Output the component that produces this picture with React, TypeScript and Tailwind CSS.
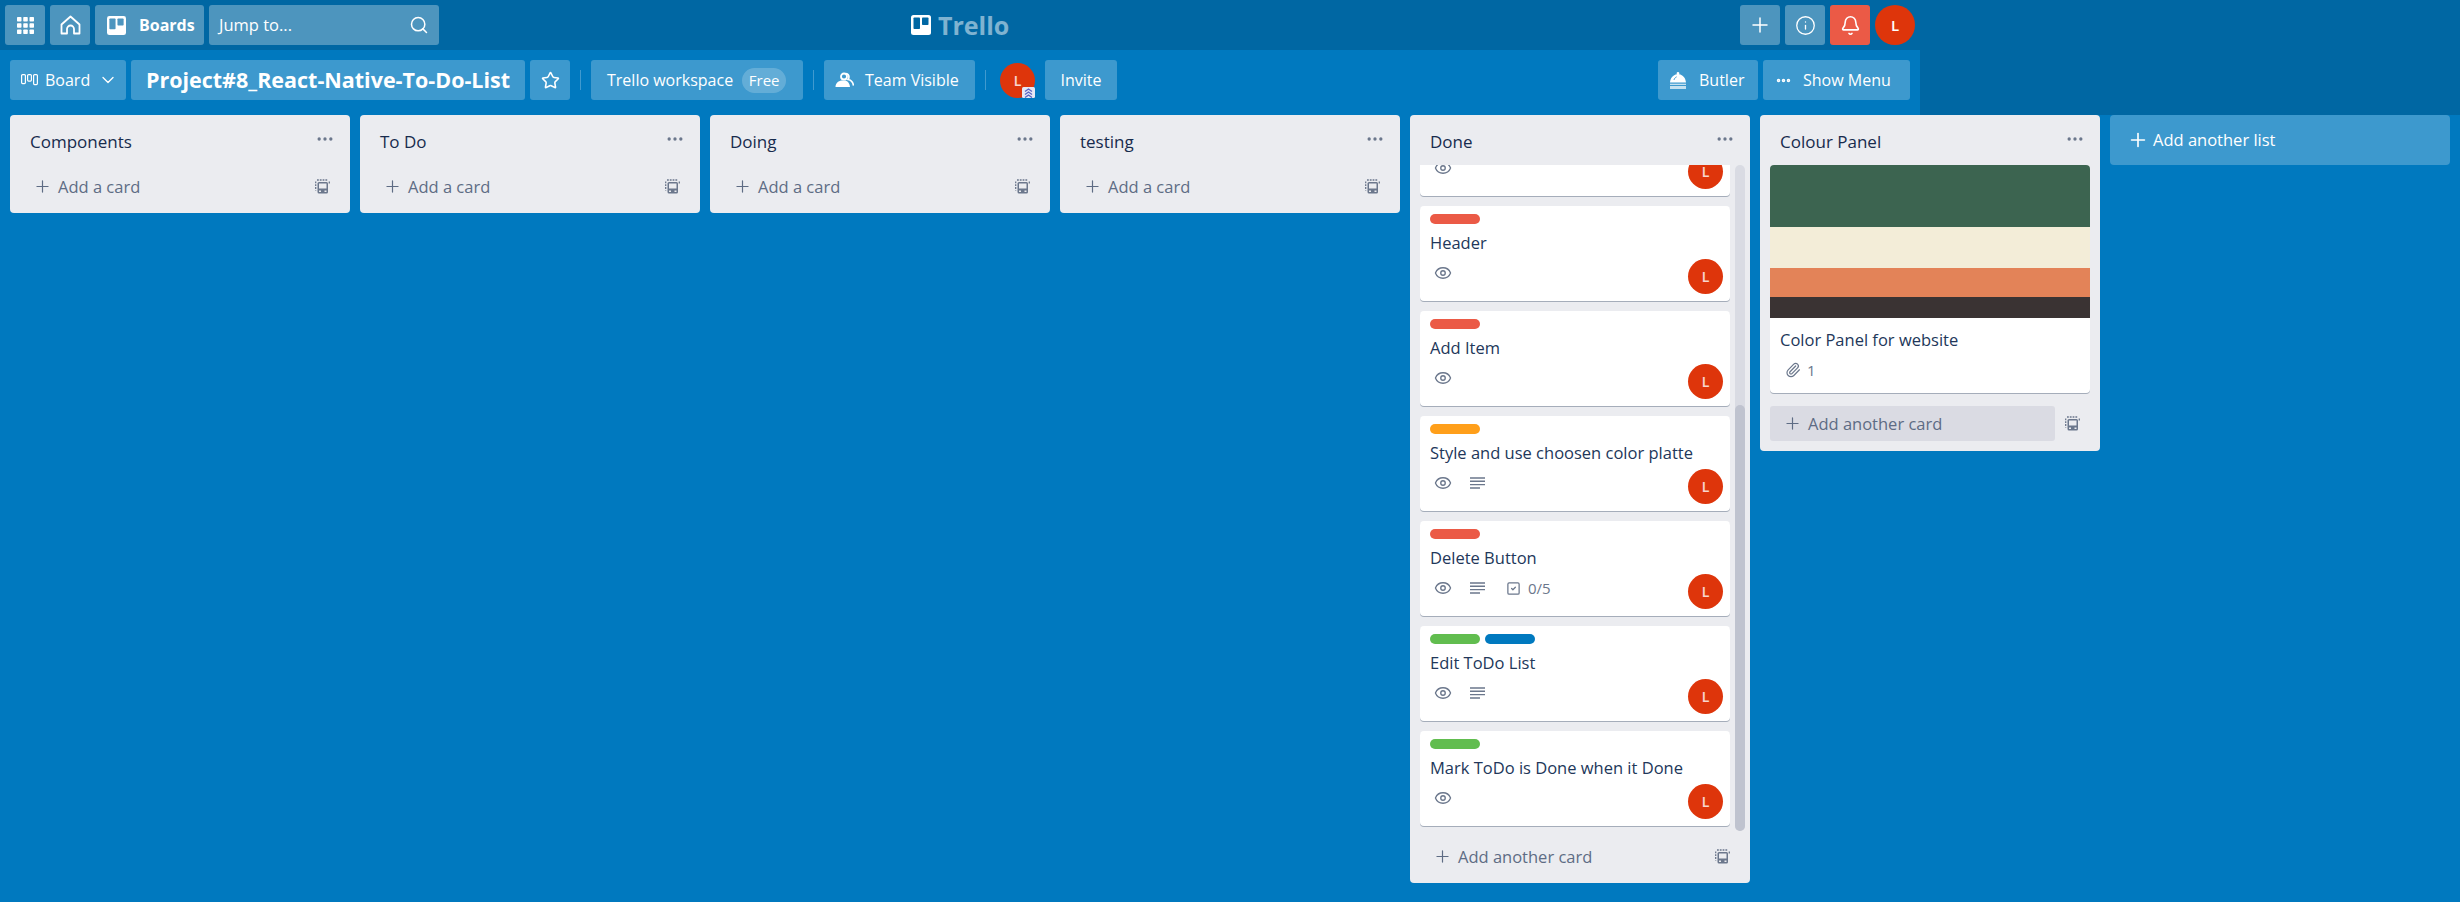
import React from "react";
import { Plus, Info, Bell, Search, Star, ChevronDown, Eye, SquareCheck, Paperclip, Ellipsis } from "lucide-react";

const font = "font-['Open_Sans','Noto_Sans',sans-serif]";
const btn = "flex items-center rounded-[3px] bg-white/30 h-10 text-white";
const boardBtn = "flex items-center rounded-[3px] bg-white/24 h-10 text-white";

function TemplateIcon({ className = "" }: { className?: string }) {
  return (
    <svg width="15" height="15" viewBox="0 0 15 15" className={className} fill="none">
      <path d="M2 1h11" stroke="#6b778c" strokeWidth="1.300" strokeDasharray="1.800 1" />
      <path d="M.7 2.500v9" stroke="#6b778c" strokeWidth="1.300" strokeDasharray="1.800 1" />
      <path d="M14.300 2.500v2" stroke="#6b778c" strokeWidth="1.300" />
      <rect x="2.500" y="3" width="10.500" height="11.500" rx="1.500" fill="#6b778c" />
      <rect x="4" y="4.500" width="7.500" height="5" fill="#ebecf0" />
      <rect x="4" y="11.500" width="2" height="1.500" fill="#ebecf0" />
      <rect x="9.500" y="11.500" width="2" height="1.500" fill="#ebecf0" />
    </svg>
  );
}

function Avatar() {
  return (
    <div className="flex h-[35px] w-[35px] shrink-0 items-center justify-center rounded-full bg-[#de350b] text-[14px] font-semibold text-white/80">L</div>
  );
}

function DescIcon() {
  return (
    <svg width="16" height="12" viewBox="0 0 16 12" stroke="#6b778c" strokeWidth="1.400">
      <path d="M0 1h15M0 4.300h15M0 7.600h15M0 11h10" />
    </svg>
  );
}

type Label = "red" | "orange" | "green" | "blue";
const labelColors: Record<Label, string> = {
  red: "bg-[#eb5a46]",
  orange: "bg-[#ff9f1a]",
  green: "bg-[#61bd4f]",
  blue: "bg-[#0079bf]",
};

function Card({ labels, title, desc, check }: { labels: Label[]; title: string; desc?: boolean; check?: string }) {
  return (
    <div className="relative h-[95px] shrink-0 rounded-[4px] bg-white px-[10px] pt-2 shadow-[0_1px_0_#a5adba]">
      <div className="flex h-[10px] gap-[5px]">
        {labels.map((l, i) => (
          <span key={i} className={`h-[10px] w-[50px] rounded-[5px] ${labelColors[l]}`} />
        ))}
      </div>
      <div className="mt-[8px] h-[22px] text-[16.500px] leading-[22px] text-[#22375a]">{title}</div>
      <div className="mt-[9px] flex h-5 items-center pl-[4px] text-[#6b778c]">
        <Eye size={18} strokeWidth={1.800} />
        {desc && <span className="ml-[18px]"><DescIcon /></span>}
        {check && (
          <div className="ml-[20px] flex items-center gap-[7px] text-[15px]">
            <SquareCheck size={15} strokeWidth={2} />
            <span>{check}</span>
          </div>
        )}
      </div>
      <div className="absolute right-[7px] bottom-[7px]">
        <Avatar />
      </div>
    </div>
  );
}

function AddRow({ text }: { text: string }) {
  return (
    <div className="flex h-[35px] items-center pl-[15px] pr-[10px] text-[#5e6c84]">
      <Plus size={19} strokeWidth={1.500} className="-ml-[2px]" />
      <span className="ml-[6px] pt-px text-[16.500px]">{text}</span>
      <TemplateIcon className="ml-auto" />
    </div>
  );
}

function EmptyList({ title }: { title: string }) {
  return (
    <section className="w-[340px] shrink-0 self-start rounded-[4px] bg-[#ebecf0] pb-[9px]">
      <ListHeader title={title} />
      <div className="mt-[4px] px-[10px]">
        <AddRow text="Add a card" />
      </div>
    </section>
  );
}

function ListHeader({ title }: { title: string }) {
  return (
    <div className="flex h-[50px] items-center justify-between pl-[20px] pr-[15px] pt-[3px] text-[#172b4d]">
      <h2 className="text-[17px] font-medium">{title}</h2>
      <Ellipsis size={20} className="-mt-[5px] text-[#6b778c]" />
    </div>
  );
}

function Grid() {
  return (
    <svg width="17" height="17" viewBox="0 0 17 17" fill="#fff">
      {[0, 6.250, 12.500].map((y) =>
        [0, 6.250, 12.500].map((x) => <rect key={`${x}-${y}`} x={x} y={y} width="4.500" height="4.500" rx="0.700" />)
      )}
    </svg>
  );
}

function HomeIcon() {
  return (
    <svg width="21" height="20" viewBox="0 0 21 20" fill="none" stroke="#fff" strokeWidth="1.800" strokeLinejoin="round">
      <path d="M1.500 9.500 10.500 1.500l9 8V18.500H14V14a3.500 3.500 0 0 0-7 0v4.500H1.500z" />
    </svg>
  );
}

function BoardsIcon({ size = 19, hole = "#4d95bf" }: { size?: number; hole?: string }) {
  return (
    <svg width={size} height={size} viewBox="0 0 20 20">
      <rect width="20" height="20" rx="2.500" fill="#fff" />
      <rect x="2.500" y="2.500" width="6.500" height="11.500" rx="0.800" fill={hole} />
      <rect x="11" y="2.500" width="6.500" height="7.500" rx="0.800" fill={hole} />
    </svg>
  );
}

function TeamIcon() {
  return (
    <svg width="19" height="16" viewBox="0 0 19 16" fill="none">
      <circle cx="9" cy="4.500" r="3" stroke="#fff" strokeWidth="1.800" />
      <path d="M11 1.500c2 .5 3 2 3 3.500 0 1-.5 2-1 2.500 3 .5 5 3 5.500 6" stroke="#fff" strokeWidth="1.600" />
      <path d="M.500 15c0-4 3-6.500 7-6.500h2c3 0 5 2.500 5.500 6.500z" fill="#fff" />
    </svg>
  );
}

function ButlerIcon() {
  return (
    <svg width="18" height="17" viewBox="0 0 18 17" fill="#fff">
      <path d="M9 0a1.300 1.300 0 0 1 1 2.200C14 2.800 16.700 6 17 10.500H1C1.300 6 4 2.800 8 2.200A1.300 1.300 0 0 1 9 0z" />
      <path d="M5 8c.3-1.500 1.300-2.600 2.700-3.200" stroke="#4297cf" strokeWidth="0.900" fill="none" />
      <rect x="1" y="11.700" width="16" height="1.300" opacity="0.700" />
      <rect x="1" y="14" width="16" height="3" opacity="0.700" />
    </svg>
  );
}

function BoardIcon() {
  return (
    <svg width="17" height="12" viewBox="0 0 17 12" fill="none" stroke="#fff" strokeWidth="1.200">
      <rect x="0.600" y="0.600" width="3.800" height="9" rx="1" />
      <rect x="6.600" y="0.600" width="3.800" height="6.500" rx="1" />
      <rect x="12.600" y="0.600" width="3.800" height="10" rx="1" />
    </svg>
  );
}

function BadgeIcon() {
  return (
    <svg width="13" height="11" viewBox="0 0 13 11" fill="none" stroke="#5b66c4" strokeWidth="1.400">
      <rect width="13" height="11" fill="#e6e8f4" stroke="none" rx="1.500" />
      <path d="M3 4.500 6.500 2 10 4.500M3 7.500 6.500 5 10 7.500M3 10.500 6.500 8 10 10.500" />
    </svg>
  );
}

function Divider() {
  return <div className="mx-[10px] mt-[10px] h-5 w-px bg-white/25" />;
}

export default function App() {
  return (
    <div className={`${font} flex min-h-[902px] flex-col bg-[#0079bf]`}>
      <div className="bg-[#0067a3]">
        <div className="w-[1920px]">
          <header className="relative flex h-[50px] items-center gap-[5px] px-[5px]">
            <button className={`${btn} w-10 justify-center`}><Grid /></button>
            <button className={`${btn} w-10 justify-center`}><HomeIcon /></button>
            <button className={`${btn} w-[109px] pl-[12px] gap-[13px] text-[16px] font-bold`}>
              <BoardsIcon />
              Boards
            </button>
            <div className={`${btn} w-[230px] justify-between px-[10px] text-[16.500px]`}>
              <span>Jump to...</span>
              <Search size={20} strokeWidth={1.800} />
            </div>
            <div className="absolute left-[911px] top-[10px] flex items-center gap-[7px] text-white/50">
              <BoardsIcon size={20} hole="#0067a3" />
              <span className="text-[25px] font-bold leading-[30px]">Trello</span>
            </div>
            <div className="ml-auto flex items-center gap-[5px]">
              <button className={`${btn} w-10 justify-center`}><Plus size={24} strokeWidth={1.500} /></button>
              <button className={`${btn} w-10 justify-center`}><Info size={21} strokeWidth={1.500} /></button>
              <button className="flex h-10 w-10 items-center justify-center rounded-[3px] bg-[#eb5a46] text-white"><Bell size={21} strokeWidth={1.800} /></button>
              <div className="flex h-10 w-10 items-center justify-center rounded-full bg-[#de350b] text-[15px] font-semibold text-white">L</div>
            </div>
          </header>
          <nav className="flex h-[65px] items-start bg-[#0079bf] px-[10px] pt-[10px] text-[16px]">
            <button className={`${boardBtn} w-[116px] pl-[11px]`}>
              <BoardIcon />
              <span className="ml-[7px]">Board</span>
              <ChevronDown size={20} strokeWidth={1.600} className="ml-[8px]" />
            </button>
            <h1 className={`${boardBtn} ml-[5px] w-[394px] justify-center text-[21.500px] font-bold`}>Project#8_React-Native-To-Do-List</h1>
            <button className={`${boardBtn} ml-[5px] w-10 justify-center`}><Star size={19} strokeWidth={2} /></button>
            <Divider />
            <button className={`${boardBtn} w-[212px] pl-[16px]`}>
              Trello workspace
              <span className="ml-[9px] flex h-[25px] w-11 items-center justify-center rounded-full bg-white/20 text-[15px]">Free</span>
            </button>
            <Divider />
            <button className={`${boardBtn} w-[151px] pl-[11px] gap-[11px]`}>
              <TeamIcon />
              Team Visible
            </button>
            <Divider />
            <div className="relative mt-[3px] ml-[4px]">
              <Avatar />
              <span className="absolute right-0 bottom-0 flex"><BadgeIcon /></span>
            </div>
            <button className={`${boardBtn} ml-[10px] w-[72px] justify-center`}>Invite</button>
            <button className={`${boardBtn} ml-auto w-[100px] pl-[11px] gap-[12px]`}>
              <ButlerIcon />
              Butler
            </button>
            <button className={`${boardBtn} ml-[5px] w-[147px] pl-[12px] gap-[11px]`}>
              <Ellipsis size={17} strokeWidth={3} />
              Show Menu
            </button>
          </nav>
        </div>
      </div>
      <main className="flex items-start gap-[10px] px-[10px]">
        <EmptyList title="Components" />
        <EmptyList title="To Do" />
        <EmptyList title="Doing" />
        <EmptyList title="testing" />
        <section className="flex h-[768px] w-[340px] shrink-0 flex-col rounded-[4px] bg-[#ebecf0]">
          <ListHeader title="Done" />
          <div className="flex h-[666px] shrink-0 pl-[10px] pr-[5px]">
            <div className="h-full w-[310px] overflow-hidden">
              <div className="-mt-[64px] flex flex-col gap-[10px]">
                <Card labels={[]} title="" />
                <Card labels={["red"]} title="Header" />
                <Card labels={["red"]} title="Add Item" />
                <Card labels={["orange"]} title="Style and use choosen color platte" desc />
                <Card labels={["red"]} title="Delete Button" desc check="0/5" />
                <Card labels={["green", "blue"]} title="Edit ToDo List" desc />
                <Card labels={["green"]} title="Mark ToDo is Done when it Done" />
              </div>
            </div>
            <div className="ml-[5px] h-full w-[10px] rounded-[5px] bg-[#d9dbe3] pt-[240px]">
              <div className="h-[426px] rounded-[5px] bg-[#bfc3cf]" />
            </div>
          </div>
          <div className="mt-[8px] px-[10px]">
            <AddRow text="Add another card" />
          </div>
        </section>
        <section className="w-[340px] shrink-0 rounded-[4px] bg-[#ebecf0] pb-[10px]">
          <ListHeader title="Colour Panel" />
          <div className="mx-[10px] overflow-hidden rounded-[4px] bg-white shadow-[0_1px_0_#a5adba]">
            <div className="h-[62px] bg-[#3c6450]" />
            <div className="h-[41px] bg-[#f3edd8]" />
            <div className="h-[29px] bg-[#e38358]" />
            <div className="h-[21px] bg-[#3a3333]" />
            <div className="h-[75px] px-[10px] pt-[11px]">
              <div className="text-[16.500px] leading-[22px] text-[#22375a]">Color Panel for website</div>
              <div className="mt-[8px] flex items-center gap-[6px] pl-[5px] text-[15px] text-[#6b778c]">
                <Paperclip size={16} strokeWidth={1.800} />
                <span>1</span>
              </div>
            </div>
          </div>
          <div className="mt-[13px] flex items-center px-[10px]">
            <div className="flex h-[35px] w-[285px] items-center rounded-[3px] bg-[#dadbe3] pl-[13px] text-[#5e6c84]">
              <Plus size={19} strokeWidth={1.500} />
              <span className="ml-[6px] pt-[2px] text-[16.500px]">Add another card</span>
            </div>
            <TemplateIcon className="ml-[10px]" />
          </div>
        </section>
        <div className="flex h-[50px] w-[340px] shrink-0 items-center rounded-[4px] bg-white/24 pl-[17px] text-[16.500px] text-white">
          <Plus size={22} strokeWidth={1.800} />
          <span className="ml-[4px]">Add another list</span>
        </div>
      </main>
    </div>
  );
}
